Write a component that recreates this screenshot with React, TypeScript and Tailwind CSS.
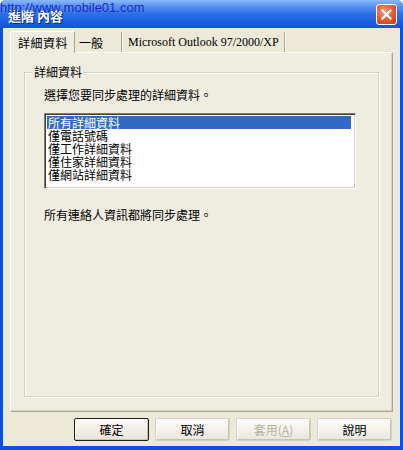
import React from "react";

const cjk = { fontFamily: '"Noto Sans CJK TC", "Noto Sans", sans-serif' };

function Btn({ label, def, disabled }: { label: React.ReactNode; def?: boolean; disabled?: boolean }) {
  return (
    <div
      className={
        "w-[75px] h-[23px] flex items-center justify-center text-[12px] leading-[13px] rounded-[2px] " +
        (def
          ? "border border-[#1c1c1c] bg-gradient-to-b from-[#fbfbf8] to-[#e6e3d6] shadow-[inset_-1px_-1px_0_#c8c4b4,inset_1px_1px_0_#ffffff]"
          : "border border-[#d4d0c4] bg-gradient-to-b from-[#fdfdfb] to-[#e9e6db] shadow-[inset_-1px_-1px_0_#c8c4b4,inset_1px_1px_0_#ffffff]") +
        (disabled ? " text-[#b4b0a2]" : " text-black")
      }
      style={cjk}
    >
      {label}
    </div>
  );
}

export default function App() {
  const items = ["所有詳細資料", "僅電話號碼", "僅工作詳細資料", "僅住家詳細資料", "僅網站詳細資料"];
  return (
    <div className="w-[403px] h-[450px] bg-[#0553e6] flex flex-col relative overflow-hidden rounded-t-[6px]" style={cjk}>
      {/* title bar */}
      <div className="h-[28px] flex items-center justify-between pl-[8px] pr-[6px] bg-[linear-gradient(to_bottom,#8ab8fa_0%,#5a93f0_22%,#2e6fe6_50%,#1c60e2_75%,#0e55da_100%)]">
        <span className="text-white font-bold text-[13px] leading-[14px] mt-[3px] [text-shadow:1px_1px_0_#0a2a7a]">進階 內容</span>
        <div className="w-[21px] h-[21px] rounded-[3px] border border-white bg-[radial-gradient(circle_at_40%_35%,#f29a7c_0%,#e0582f_55%,#c23a15_100%)] flex items-center justify-center">
          <svg width="11" height="11" viewBox="0 0 11 11">
            <path d="M1.5 1.5 L9.5 9.5 M9.5 1.5 L1.5 9.5" stroke="white" strokeWidth="2.2" strokeLinecap="square" />
          </svg>
        </div>
      </div>

      {/* watermark */}
      <div
        className="absolute left-0 top-[1px] text-[13px] leading-[14px] text-[#1e28c8]"
        style={{ fontFamily: '"Liberation Sans", Arial, sans-serif' }}
      >
        http://www.mobile01.com
      </div>

      {/* body */}
      <div className="flex-1 mx-[3px] mb-[4px] bg-[#ece9d8] flex flex-col pt-[2px]">
        {/* tabs */}
        <div className="flex items-end h-[22px] ml-[7px] mr-[7px] relative z-10">
          <div className="h-[22px] pl-[6px] pr-[4px] flex items-center border-t border-l border-r border-t-[#ffffff] border-l-[#ffffff] border-r-[#a9a692] bg-[#efece0] text-[12px] leading-[13px] text-black mb-[-1px]">
            <span className="w-[52px] ml-[1px] tracking-[0.5px]">詳細資料</span>
          </div>
          <div className="h-[20px] pl-[4px] pr-[18px] flex items-center border-r border-r-[#a9a692] shadow-[1px_0_0_#ffffff] text-[12px] leading-[13px] text-black">
            一般
          </div>
          <div
            className="h-[20px] pl-[5px] pr-[5px] ml-[1px] flex items-center border-r border-r-[#a9a692] shadow-[1px_0_0_#ffffff] text-[12px] leading-[13px] text-black"
            style={{ fontFamily: '"Liberation Serif", "Times New Roman", serif' }}
          >
            Microsoft Outlook 97/2000/XP
          </div>
        </div>

        {/* panel */}
        <div className="h-[360px] mx-[7px] border border-t-[#ffffff] border-l-[#ffffff] border-r-[#a9a692] border-b-[#a9a692] shadow-[inset_-1px_-1px_0_#d6d2c2] bg-[#efece0] pt-[19px] px-[13px] pb-[14px] flex">
          {/* group box */}
          <div className="flex-1 relative border border-[#d0d0bf] shadow-[inset_1px_1px_0_#ffffff,1px_1px_0_#ffffff] pt-[15px] pl-[19px] pr-[22px] flex flex-col">
            <div className="absolute left-[7px] top-[-8px] px-[2px] bg-[#efece0] text-[12px] leading-[14px] text-black">詳細資料</div>
            <div className="text-[12px] leading-[13px] text-black">選擇您要同步處理的詳細資料。</div>
            <div className="mt-[12px] h-[76px] border border-t-[#7f7d72] border-l-[#7f7d72] border-r-[#ffffff] border-b-[#ffffff] bg-white shadow-[inset_1px_1px_0_#404040,inset_-1px_-1px_0_#d4d0c8] p-[2px] flex flex-col">
              {items.map((t, i) => (
                <div
                  key={t}
                  className={
                    "h-[13px] text-[12px] leading-[13px] pl-[1px] whitespace-nowrap " +
                    (i === 0 ? "bg-[#316ac5] text-white mr-[2px]" : "text-black")
                  }
                >
                  {t}
                </div>
              ))}
            </div>
            <div className="mt-[19px] text-[12px] leading-[13px] text-black">所有連絡人資訊都將同步處理。</div>
          </div>
        </div>

        {/* buttons */}
        <div className="mt-[6px] flex justify-end gap-[6px] mr-[8px]">
          <Btn label="確定" def />
          <Btn label="取消" />
          <Btn
            label={
              <span>
                套用(<span className="underline">A</span>)
              </span>
            }
            disabled
          />
          <Btn label="說明" />
        </div>
      </div>
    </div>
  );
}
